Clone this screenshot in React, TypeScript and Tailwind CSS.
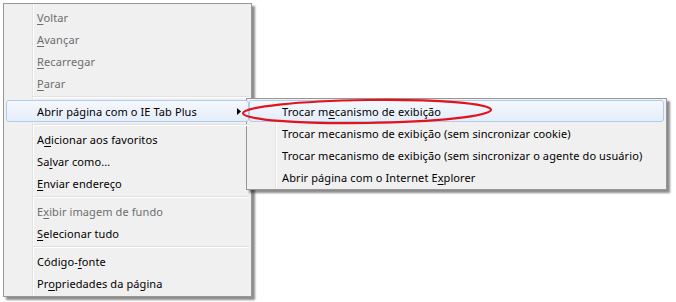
import React from 'react';
import clsx from 'clsx';

type ItemProps = {
  children: React.ReactNode;
  disabled?: boolean;
  active?: boolean;
  arrow?: boolean;
  pad?: string;
};

const MenuItem: React.FC<ItemProps> = ({ children, disabled, active, arrow, pad = 'pl-[30px]' }) => (
  <div
    className={clsx(
      'relative z-10 mx-[2px] flex h-[22px] items-center rounded-[3px] border pr-[7px] whitespace-nowrap',
      pad,
      active ? 'border-[#aecbf0] bg-linear-to-b from-[#f5f8fd] to-[#e4edf9]' : 'border-transparent',
      disabled ? 'text-[#6d6d6d]' : 'text-black'
    )}
  >
    <span className="flex-1">{children}</span>
    {arrow && (
      <svg width="4" height="7" viewBox="0 0 4 7" className="shrink-0">
        <path d="M0 0 L4 3.5 L0 7 Z" fill="#000" />
      </svg>
    )}
  </div>
);

const Separator = () => (
  <div className="relative z-10 ml-[29px] mr-[2px] py-[2px]">
    <div className="h-px bg-[#e0e0e0]" />
    <div className="h-px bg-white" />
  </div>
);

const Gutter = () => (
  <div className="absolute top-0 bottom-0 left-[28px] z-0 flex">
    <div className="w-px bg-[#e2e3e3]" />
    <div className="w-px bg-white" />
  </div>
);

const U: React.FC<{ children: React.ReactNode }> = ({ children }) => (
  <span className="underline decoration-1 underline-offset-2">{children}</span>
);

const App: React.FC = () => {
  return (
    <div className="relative h-[302px] w-[676px] overflow-hidden bg-white pt-[3px] pl-[3px] font-['Noto_Sans',sans-serif] text-[11px] leading-none tracking-[0.1px]">
      {/* Main context menu */}
      <div className="relative w-[249px] border border-[#979797] bg-[#f0f0f0] py-[2px] shadow-[3px_3px_2px_rgba(0,0,0,0.45)]">
        <Gutter />
        <MenuItem disabled><U>V</U>oltar</MenuItem>
        <MenuItem disabled><U>A</U>vançar</MenuItem>
        <MenuItem disabled><U>R</U>ecarregar</MenuItem>
        <MenuItem disabled><U>P</U>arar</MenuItem>
        <Separator />
        <MenuItem active arrow>Abrir página com o IE Tab Plus</MenuItem>
        <Separator />
        <MenuItem>A<U>d</U>icionar aos favoritos</MenuItem>
        <MenuItem>Sa<U>l</U>var como...</MenuItem>
        <MenuItem><U>E</U>nviar endereço</MenuItem>
        <Separator />
        <MenuItem disabled>E<U>x</U>ibir imagem de fundo</MenuItem>
        <MenuItem><U>S</U>elecionar tudo</MenuItem>
        <Separator />
        <MenuItem>Código-<U>f</U>onte</MenuItem>
        <MenuItem>Pr<U>o</U>priedades da página</MenuItem>
      </div>

      {/* Submenu flyout */}
      <div className="absolute top-[98px] left-[246px] w-[421px] border border-[#979797] bg-[#f0f0f0] py-px shadow-[3px_3px_2px_rgba(0,0,0,0.45)]">
        <Gutter />
        <MenuItem active pad="pl-[32px]">Trocar m<U>e</U>canismo de exibição</MenuItem>
        <MenuItem pad="pl-[32px]">Trocar mecanismo de exibição (sem sincronizar cookie)</MenuItem>
        <MenuItem pad="pl-[32px]">Trocar mecanismo de exibição (sem sincronizar o agente do usuário)</MenuItem>
        <MenuItem pad="pl-[32px]">Abrir página com o Internet E<U>x</U>plorer</MenuItem>
      </div>

      {/* Red annotation ellipse */}
      <svg className="pointer-events-none absolute top-[96px] left-[240px] z-20" width="258" height="32" viewBox="0 0 258 32">
        <ellipse cx="127" cy="15.5" rx="124" ry="11.5" fill="none" stroke="#e3121b" strokeWidth="2.2" transform="rotate(-0.8 127 15.5)" />
      </svg>
    </div>
  );
};

export default App;
